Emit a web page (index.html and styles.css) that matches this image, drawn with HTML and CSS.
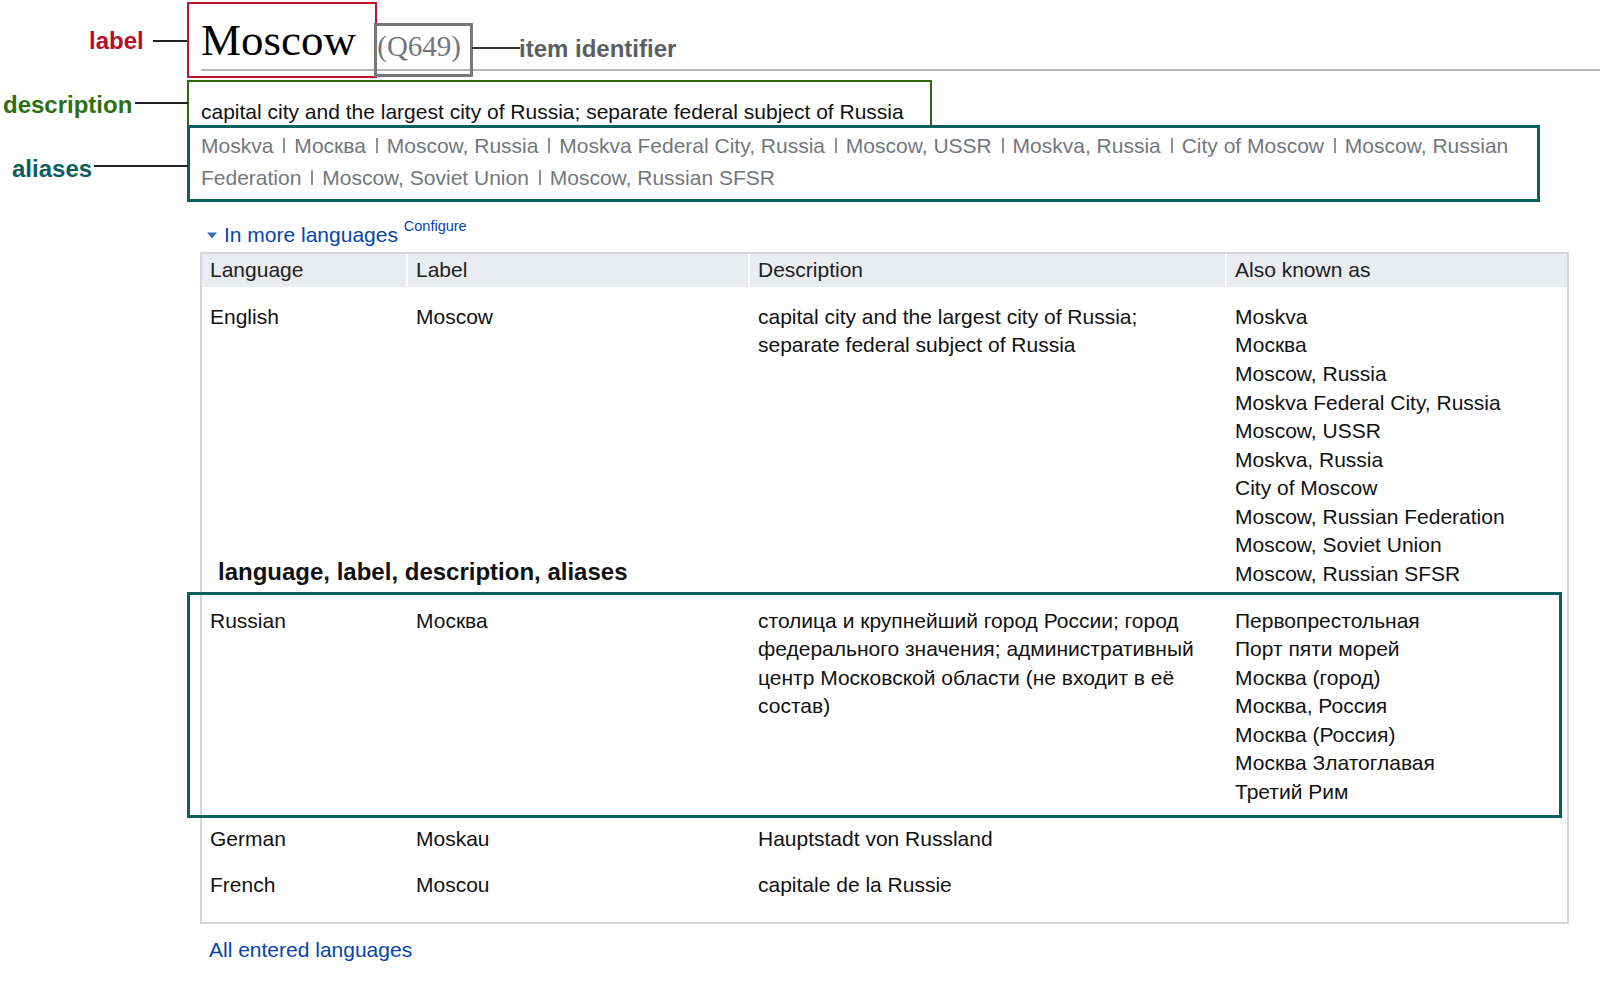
FILE: index.html
```html
<!DOCTYPE html>
<html lang="en">
<head>
<meta charset="utf-8">
<title>Moscow (Q649)</title>
<link rel="stylesheet" href="styles.css">
</head>
<body>
<div class="page">
  <h1 class="title">Moscow <span class="qid">(Q649)</span></h1>
  <div class="desc">capital city and the largest city of Russia; separate federal subject of Russia</div>
  <div class="aliases"><span class="alias">Moskva</span> <span class="alias">Москва</span> <span class="alias">Moscow, Russia</span> <span class="alias">Moskva Federal City, Russia</span> <span class="alias">Moscow, USSR</span> <span class="alias">Moskva, Russia</span> <span class="alias">City of Moscow</span> <span class="alias">Moscow, Russian Federation</span> <span class="alias">Moscow, Soviet Union</span> <span class="alias">Moscow, Russian SFSR</span></div>

  <div class="toggle">
    <a class="toggle-link" href="#"><svg class="tri" width="10" height="7" viewBox="0 0 10 7"><path d="M0 0.5 L10 0.5 L5 6.5 Z" fill="#3b65b8"/></svg>In more languages</a> <a class="configure" href="#">Configure</a>
  </div>

  <div class="terms">
    <div class="row head">
      <div class="cell">Language</div>
      <div class="cell">Label</div>
      <div class="cell">Description</div>
      <div class="cell">Also known as</div>
    </div>
    <div class="tbody">
      <div class="row">
        <div class="cell">English</div>
        <div class="cell">Moscow</div>
        <div class="cell">capital city and the largest city of Russia; separate federal subject of Russia</div>
        <div class="cell">
          <div>Moskva</div>
          <div>Москва</div>
          <div>Moscow, Russia</div>
          <div>Moskva Federal City, Russia</div>
          <div>Moscow, USSR</div>
          <div>Moskva, Russia</div>
          <div>City of Moscow</div>
          <div>Moscow, Russian Federation</div>
          <div>Moscow, Soviet Union</div>
          <div>Moscow, Russian SFSR</div>
        </div>
      </div>
      <div class="row highlighted">
        <div class="cell">Russian</div>
        <div class="cell">Москва</div>
        <div class="cell">столица и крупнейший город России; город федерального значения; административный центр Московской области (не входит в её состав)</div>
        <div class="cell">
          <div>Первопрестольная</div>
          <div>Порт пяти морей</div>
          <div>Москва (город)</div>
          <div>Москва, Россия</div>
          <div>Москва (Россия)</div>
          <div>Москва Златоглавая</div>
          <div>Третий Рим</div>
        </div>
        <div class="box-teal-row"></div>
      </div>
      <div class="row row-german">
        <div class="cell">German</div>
        <div class="cell">Moskau</div>
        <div class="cell">Hauptstadt von Russland</div>
        <div class="cell"></div>
      </div>
      <div class="row">
        <div class="cell">French</div>
        <div class="cell">Moscou</div>
        <div class="cell">capitale de la Russie</div>
        <div class="cell"></div>
      </div>
    </div>
  </div>

  <div class="all"><a href="#">All entered languages</a></div>

  <!-- annotations -->
  <div class="box box-red"></div>
  <div class="box box-grey"></div>
  <div class="box box-green"></div>
  <div class="box box-teal"></div>

  <div class="note note-label">label</div>
  <div class="note note-desc">description</div>
  <div class="note note-alias">aliases</div>
  <div class="note note-id">item identifier</div>
  <div class="note note-row">language, label, description, aliases</div>

  <div class="line line-label"></div>
  <div class="line line-desc"></div>
  <div class="line line-alias"></div>
  <div class="line line-id"></div>
</div>
</body>
</html>
```

FILE: styles.css
```css
html, body {
  margin: 0;
  padding: 0;
  background: #ffffff;
}

body {
  font-family: "Liberation Sans", Arial, "Noto Sans CJK SC", sans-serif;
  font-size: 21px;
  line-height: 28.57px;
  color: #111111;
}

.page {
  position: relative;
  padding-left: 201px;
  min-height: 983px;
  box-sizing: border-box;
}

a {
  color: #0645ad;
  text-decoration: none;
}

.title {
  margin: 0;
  padding: 18px 0 6px 0;
  font-family: "Liberation Serif", "Times New Roman", serif;
  font-weight: normal;
  font-size: 45px;
  line-height: 45px;
  color: #000000;
  border-bottom: 2px solid #b4b8be;
}

.qid {
  font-size: 29px;
  line-height: 1;
  color: #72777d;
  margin-left: 10px;
  vertical-align: -1px;
}

.desc {
  margin-top: 27px;
  color: #111111;
}

.aliases {
  margin-top: 3px;
  line-height: 32.6px;
  color: #72777d;
  width: 1340px;
}

.alias + .alias::before {
  content: "";
  display: inline-block;
  width: 2px;
  height: 15px;
  background: #8e9297;
  margin: 0 9px 0 4px;
  vertical-align: baseline;
}

.toggle {
  margin-top: 26px;
  padding-left: 6px;
}

.tri {
  margin-right: 7px;
  vertical-align: 3px;
}

.configure {
  font-size: 14.5px;
  line-height: 1;
  position: relative;
  top: -10.5px;
}

.terms {
  margin-top: 3px;
  margin-left: -1px;
  width: 1369px;
  border: 2px solid #d2d5d9;
  box-sizing: border-box;
}

.row {
  display: grid;
  grid-template-columns: 204px 342px 477px 1fr;
}

.cell {
  padding: 9px 8px;
}

.row .cell + .cell {
  border-left: 2px solid transparent;
}

.head {
  background: #eaecf0;
}

.head .cell {
  padding-top: 2px;
  padding-bottom: 2px;
  color: #202122;
}

.row.head .cell + .cell {
  border-left-color: #ffffff;
}

.tbody {
  padding: 7px 0 13px 0;
}

.row-german .cell {
  padding-top: 10px;
  padding-bottom: 8px;
}

.highlighted {
  position: relative;
}

.box-teal-row {
  position: absolute;
  top: -6px;
  bottom: -3px;
  left: -15px;
  right: 5px;
  border: 3px solid #0d5e5e;
  pointer-events: none;
}

.all {
  margin-top: 12px;
  padding-left: 8px;
}

/* annotations */
.box {
  position: absolute;
  box-sizing: border-box;
  pointer-events: none;
}

.box-red {
  left: 187px;
  top: 2px;
  width: 190px;
  height: 76px;
  border: 2px solid #c3102c;
}

.box-grey {
  left: 374px;
  top: 23px;
  width: 99px;
  height: 54px;
  border: 3px solid #777777;
}

.box-green {
  left: 187px;
  top: 80px;
  width: 745px;
  height: 48px;
  border: 2px solid #2b6a12;
}

.box-teal {
  left: 187px;
  top: 125px;
  width: 1353px;
  height: 77px;
  border: 3px solid #0d5e5e;
}

.note {
  position: absolute;
  font-weight: bold;
  font-size: 24px;
  line-height: 24px;
  white-space: nowrap;
}

.note-label {
  left: 89px;
  top: 29px;
  color: #b5102a;
}

.note-desc {
  left: 3px;
  top: 93px;
  color: #2f6e12;
}

.note-alias {
  left: 12px;
  top: 157px;
  color: #0c5e5e;
}

.note-id {
  left: 519px;
  top: 37px;
  color: #5a5e63;
}

.note-row {
  left: 218px;
  top: 560px;
  color: #111111;
}

.line {
  position: absolute;
  height: 1.5px;
  background: #222222;
}

.line-label {
  left: 153px;
  top: 40px;
  width: 34px;
}

.line-desc {
  left: 135px;
  top: 102px;
  width: 53px;
}

.line-alias {
  left: 94px;
  top: 165px;
  width: 94px;
}

.line-id {
  left: 472px;
  top: 47px;
  width: 48px;
  background: #333333;
}
```
